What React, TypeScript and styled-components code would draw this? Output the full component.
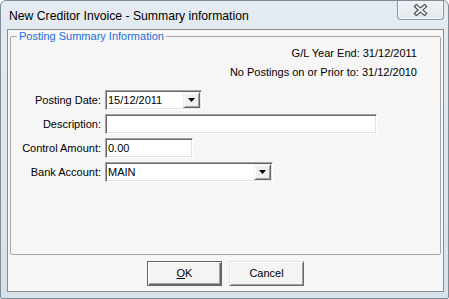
import React from "react";
import styled, { createGlobalStyle } from "styled-components";

const Global = createGlobalStyle`
  html, body { margin: 0; padding: 0; background: #ffffff; }
  body { font-family: "Liberation Sans", Arial, sans-serif; }
  * { box-sizing: border-box; }
`;

const Window = styled.div`
  width: 449px;
  height: 299px;
  display: flex;
  flex-direction: column;
  background: linear-gradient(180deg, #e4ebf1 0%, #dce5ec 60%, #d7e1e9 100%);
  border: 1px solid #7f8b96;
  border-radius: 6px 6px 2px 2px;
  overflow: hidden;
`;

const TitleBar = styled.div`
  height: 28px;
  flex: none;
  display: flex;
  align-items: flex-start;
  padding: 0 4px 0 8px;
`;

const Title = styled.div`
  flex: 1;
  font-family: "Liberation Sans", Arial, sans-serif;
  font-size: 12.2px;
  color: #000;
  line-height: 16px;
  padding-top: 7px;
  white-space: nowrap;
`;

const CloseButton = styled.div`
  width: 47px;
  height: 20px;
  margin-top: -1px;
  display: flex;
  align-items: center;
  justify-content: center;
  border: 1px solid #8896a3;
  border-top: none;
  border-radius: 0 0 4px 4px;
  background: linear-gradient(180deg, #eef2f5 0%, #e2e8ed 100%);
  box-shadow: inset 0 -1px 0 #f7f9fb, inset 1px 0 0 #f7f9fb, inset -1px 0 0 #f7f9fb;
`;

const Client = styled.div`
  flex: 1;
  margin: 0 4px 6px 6px;
  border: 1px solid #8c8c8c;
  background: #f6f6f6;
  display: flex;
  flex-direction: column;
  padding: 0 2px 0 2px;
`;

const Group = styled.fieldset`
  flex: 1;
  margin: 1px 0 0 0;
  padding: 2px 23px 0 0;
  min-width: 0;
  border: 1px solid #a6a6a6;
  border-radius: 2px;
  display: flex;
  flex-direction: column;
`;

const Legend = styled.legend`
  margin-left: 6px;
  padding: 0 2px;
  color: #1a6fd8;
  font-size: 11px;
  line-height: 11px;
`;

const InfoBlock = styled.div`
  display: flex;
  flex-direction: column;
  align-items: flex-end;
`;

const InfoLine = styled.div`
  font-size: 11px;
  line-height: 19px;
  color: #000;
  white-space: nowrap;
`;

const Form = styled.div`
  margin-top: 8px;
  display: grid;
  grid-template-columns: 90px auto;
  column-gap: 4px;
  row-gap: 4px;
  align-items: center;
  justify-items: start;
`;

const Label = styled.div`
  justify-self: end;
  font-size: 11px;
  color: #000;
  white-space: nowrap;
`;

const Field = styled.div<{ $w: number }>`
  width: ${(p) => p.$w}px;
  height: 20px;
  background: #ffffff;
  border: 1px solid;
  border-color: #a0a0a0 #ffffff #ffffff #a0a0a0;
  box-shadow: inset 1px 1px 0 #696969, inset -1px -1px 0 #e3e3e3;
  display: flex;
  align-items: center;
  padding: 1px 1px 1px 2px;
  font-size: 11px;
  color: #000;
`;

const FieldText = styled.span`
  flex: 1;
  white-space: nowrap;
`;

const DropButton = styled.div`
  width: 17px;
  height: 16px;
  flex: none;
  display: flex;
  align-items: center;
  justify-content: center;
  background: #f0f0f0;
  border: 1px solid;
  border-color: #f0f0f0 #696969 #696969 #f0f0f0;
  box-shadow: inset 1px 1px 0 #ffffff, inset -1px -1px 0 #a0a0a0;
`;

const ButtonBar = styled.div`
  height: 36px;
  flex: none;
  display: flex;
  align-items: center;
  justify-content: center;
  gap: 7px;
`;

const Button = styled.div<{ $default?: boolean }>`
  width: 75px;
  height: 25px;
  display: flex;
  align-items: center;
  justify-content: center;
  font-size: 11px;
  color: #000;
  background: #f4f4f4;
  border: 1px solid;
  border-color: ${(p) =>
    p.$default ? "#646464" : "#e3e3e3 #696969 #696969 #e3e3e3"};
  box-shadow: ${(p) =>
    p.$default
      ? "inset 1px 1px 0 #ffffff, inset -1px -1px 0 #696969, inset -2px -2px 0 #a0a0a0"
      : "inset 1px 1px 0 #ffffff, inset -1px -1px 0 #a0a0a0"};
`;

const Arrow = () => (
  <svg width="7" height="4" viewBox="0 0 7 4">
    <polygon points="0,0 7,0 3.5,4" fill="#000" />
  </svg>
);

const CloseX = () => (
  <svg width="15" height="12" viewBox="0 0 15 12">
    <path d="M3.5 2.5 L11.5 9.5 M11.5 2.5 L3.5 9.5" stroke="#4a4f55" strokeWidth="4.2" strokeLinecap="square" fill="none" />
    <path d="M3.5 2.5 L11.5 9.5 M11.5 2.5 L3.5 9.5" stroke="#ffffff" strokeWidth="1.8" strokeLinecap="square" fill="none" />
  </svg>
);

export default function App() {
  return (
    <>
      <Global />
      <Window>
        <TitleBar>
          <Title>New Creditor Invoice - Summary information</Title>
          <CloseButton>
            <CloseX />
          </CloseButton>
        </TitleBar>
        <Client>
          <Group>
            <Legend>Posting Summary Information</Legend>
            <InfoBlock>
              <InfoLine>G/L Year End: 31/12/2011</InfoLine>
              <InfoLine>No Postings on or Prior to: 31/12/2010</InfoLine>
            </InfoBlock>
            <Form>
              <Label>Posting Date:</Label>
              <Field $w={97}>
                <FieldText>15/12/2011</FieldText>
                <DropButton>
                  <Arrow />
                </DropButton>
              </Field>
              <Label>Description:</Label>
              <Field $w={272}>
                <FieldText />
              </Field>
              <Label>Control Amount:</Label>
              <Field $w={88}>
                <FieldText>0.00</FieldText>
              </Field>
              <Label>Bank Account:</Label>
              <Field $w={168}>
                <FieldText>MAIN</FieldText>
                <DropButton>
                  <Arrow />
                </DropButton>
              </Field>
            </Form>
          </Group>
          <ButtonBar>
            <Button $default>
              <span>
                <u>O</u>K
              </span>
            </Button>
            <Button>Cancel</Button>
          </ButtonBar>
        </Client>
      </Window>
    </>
  );
}
